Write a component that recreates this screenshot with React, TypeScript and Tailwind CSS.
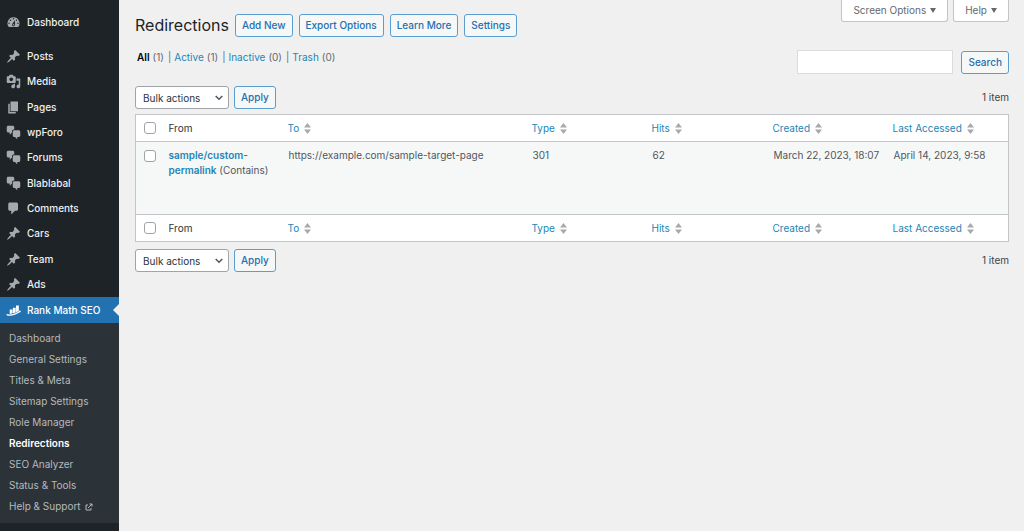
import { useState } from "react";

const icons = {
  dashboard:
    "M3.76 16h12.48A7.998 7.998 0 0 0 10 3a7.998 7.998 0 0 0-6.24 13zM10 4c.55 0 1 .45 1 1s-.45 1-1 1-1-.45-1-1 .45-1 1-1zM6 6c.55 0 1 .45 1 1s-.45 1-1 1-1-.45-1-1 .45-1 1-1zm8 0c.55 0 1 .45 1 1s-.45 1-1 1-1-.45-1-1 .45-1 1-1zm-5.37 5.55L12 7v6c0 1.1-.9 2-2 2s-2-.9-2-2c0-.57.24-1.08.63-1.45zM4 10c.55 0 1 .45 1 1s-.45 1-1 1-1-.45-1-1 .45-1 1-1zm12 0c.55 0 1 .45 1 1s-.45 1-1 1-1-.45-1-1 .45-1 1-1zm-5 3c0-.55-.45-1-1-1s-1 .45-1 1 .45 1 1 1 1-.45 1-1z",
  pin: "M10.44 3.02l1.82-1.82 6.36 6.35-1.83 1.82c-1.05-.68-2.48-.57-3.41.36l-.75.75c-.92.93-1.04 2.35-.35 3.41l-1.83 1.82-2.41-2.41-2.8 2.79c-.42.42-3.38 2.71-3.8 2.29s1.86-3.39 2.28-3.81l2.79-2.79L4.1 9.36l1.83-1.82c1.05.69 2.48.57 3.4-.36l.75-.75c.93-.92 1.05-2.35.36-3.41z",
  media:
    "M13 11V4c0-.55-.45-1-1-1h-1.67L9 1H5L3.67 3H2c-.55 0-1 .45-1 1v7c0 .55.45 1 1 1h10c.55 0 1-.45 1-1zM7 4.5c1.38 0 2.5 1.12 2.5 2.5S8.38 9.5 7 9.5 4.5 8.38 4.5 7 5.62 4.5 7 4.5zM14 6h5v10.5c0 1.38-1.12 2.5-2.5 2.5S14 17.88 14 16.5s1.12-2.5 2.5-2.5c.17 0 .34.02.5.05V9h-3V6zm-4 8.05V13h2v3.5c0 1.38-1.12 2.5-2.5 2.5S7 17.88 7 16.5 8.12 14 9.5 14c.17 0 .34.02.5.05z",
  pages: "M6 15V2h10v13H6zm-1 1h8v2H3V5h2v11z",
  chat: "M11 6h-.82C9.07 6 8 7.2 8 8.16V10l-3 3v-3H3c-1.1 0-2-.9-2-2V3c0-1.1.9-2 2-2h6c1.1 0 2 .9 2 2v3zm0 1h6c1.1 0 2 .9 2 2v5c0 1.1-.9 2-2 2h-2v3l-3-3h-1c-1.1 0-2-.9-2-2V9c0-1.1.9-2 2-2z",
  comment:
    "M5 2h9c1.1 0 2 .9 2 2v7c0 1.1-.9 2-2 2h-2l-5 5v-5H5c-1.1 0-2-.9-2-2V4c0-1.1.9-2 2-2z",
  rankMath:
    "M5 8.5h3.700v5.300L5 14.500zM9.200 6.200h3.700v6.300l-3.700 1.200zM13.400 3.200h3.700v7.300l-3.700 1.800zM0 14.800l5.500.500c5-.800 9-2.300 12-4.300l-.600-.900 3.100.2-1.300 2.800-.600-.900c-3.300 2.400-7.300 4.200-11.600 4.800H2z",
};

type IconName = keyof typeof icons;

const menuItems: { label: string; icon: IconName }[] = [
  { label: "Posts", icon: "pin" },
  { label: "Media", icon: "media" },
  { label: "Pages", icon: "pages" },
  { label: "wpForo", icon: "chat" },
  { label: "Forums", icon: "chat" },
  { label: "Blablabal", icon: "chat" },
  { label: "Comments", icon: "comment" },
  { label: "Cars", icon: "pin" },
  { label: "Team", icon: "pin" },
  { label: "Ads", icon: "pin" },
];

const subItems = [
  "Dashboard",
  "General Settings",
  "Titles & Meta",
  "Sitemap Settings",
  "Role Manager",
  "Redirections",
  "SEO Analyzer",
  "Status & Tools",
  "Help & Support",
];

const filters = [
  { label: "All", count: 1 },
  { label: "Active", count: 1 },
  { label: "Inactive", count: 0 },
  { label: "Trash", count: 0 },
];

const sortable = ["To", "Type", "Hits", "Created", "Last Accessed"];

function Icon({ name }: { name: IconName }) {
  return (
    <svg viewBox="0 0 20 20" className="size-[15px] shrink-0 fill-current" aria-hidden="true">
      <path d={icons[name]} />
    </svg>
  );
}

function MenuLink({ label, icon }: { label: string; icon: IconName }) {
  return (
    <a href="#" className="flex items-center gap-1.5 pl-1.5 text-[#a7aaad]">
      <Icon name={icon} />
      <span className="text-[#f0f0f1]">{label}</span>
    </a>
  );
}

function Button({ children }: { children: string }) {
  return (
    <button
      type="button"
      className="h-[23px] rounded-[3px] border border-[#5b9dd0] bg-[#f6f7f7] px-1.5 font-medium text-[#2271b1]"
    >
      {children}
    </button>
  );
}

function SortArrows() {
  return (
    <svg viewBox="0 0 7 11" className="h-[11px] w-[7px] fill-[#a7aaad]" aria-hidden="true">
      <path d="M3.500 0L7 4.500H0zM3.500 11L0 6.500h7z" />
    </svg>
  );
}

function Checkbox({ label }: { label: string }) {
  return (
    <input
      type="checkbox"
      aria-label={label}
      className="block size-3 appearance-none rounded-[3px] border border-[#a0a3a7] bg-white checked:bg-[#2271b1]"
    />
  );
}

function HeadingRow() {
  return (
    <tr className="h-[27px] bg-white">
      <th className="pl-2">
        <Checkbox label="Select all" />
      </th>
      <th className="px-[7px] font-normal text-[#2c3338]">From</th>
      {sortable.map((name) => (
        <th key={name} className="px-[7px] font-normal">
          <a href="#" className="flex items-center gap-[5px] text-[#2585b5]">
            {name}
            <SortArrows />
          </a>
        </th>
      ))}
    </tr>
  );
}

function BulkActions({ id }: { id: string }) {
  return (
    <div className="flex items-center justify-between">
      <div className="flex gap-[5px]">
        <div className="relative">
          <select
            id={id}
            aria-label="Select bulk action"
            className="h-[23px] w-[94px] appearance-none rounded-[3px] border border-[#a0a3a7] bg-white pr-4 pl-[7px] leading-5 text-[#2c3338]"
          >
            <option>Bulk actions</option>
            <option>Activate</option>
            <option>Deactivate</option>
            <option>Move to Trash</option>
          </select>
          <svg
            viewBox="0 0 8 6"
            className="pointer-events-none absolute top-[9px] right-1.5 h-1.5 w-2 fill-none stroke-[#50575e] stroke-[1.5]"
            aria-hidden="true"
          >
            <path d="M.7 1L4 4.300 7.300 1" />
          </svg>
        </div>
        <Button>Apply</Button>
      </div>
      <span>1 item</span>
    </div>
  );
}

export default function App() {
  const [query, setQuery] = useState("");

  return (
    <div className="flex min-h-screen bg-[#f0f0f1] font-['Inter',sans-serif] text-[10px] leading-[15px] text-[#3c434a]">
      <nav className="w-[119px] shrink-0 bg-[#1d2327]">
        <div className="font-medium">
          <div className="grid h-11 items-center">
            <MenuLink label="Dashboard" icon="dashboard" />
          </div>
          <div className="grid h-[253px] auto-rows-fr">
            {menuItems.map((item) => (
              <MenuLink key={item.label} {...item} />
            ))}
          </div>
          <a
            href="#"
            className="relative flex h-[26px] items-center gap-1.5 bg-[#2271b1] pl-1.5 text-white"
          >
            <Icon name="rankMath" />
            Rank Math SEO
            <span className="absolute right-0 border-y-[6px] border-r-[6px] border-y-transparent border-r-[#f0f0f1]" />
          </a>
        </div>
        <ul className="bg-[#2c3338] pt-[5px] pb-1.5 text-[#b5b9bd]">
          {subItems.map((name) => (
            <li key={name} className="flex h-[21px] items-center pl-[9px]">
              <a
                href="#"
                className={
                  name === "Redirections"
                    ? "font-semibold text-white"
                    : "flex items-center gap-1"
                }
              >
                {name}
                {name === "Help & Support" && (
                  <svg
                    viewBox="0 0 8 8"
                    className="size-2 fill-none stroke-current"
                    aria-hidden="true"
                  >
                    <path d="M3 2H1v5h5V5M3 5l4-4M4.500 1H7v2.500" />
                  </svg>
                )}
              </a>
            </li>
          ))}
        </ul>
      </nav>

      <main className="min-w-0 flex-1 pr-[15px] pl-4">
        <div className="flex items-start justify-between">
          <div className="flex items-center gap-1.5 pt-3.5">
            <h1 className="text-base leading-[23px] text-[#1d2327]">Redirections</h1>
            <Button>Add New</Button>
            <Button>Export Options</Button>
            <Button>Learn More</Button>
            <Button>Settings</Button>
          </div>
          <div className="flex gap-[5px] text-[#646970]">
            {["Screen Options", "Help"].map((name) => (
              <button
                key={name}
                type="button"
                className="flex h-[22px] items-center gap-1 rounded-b-[3px] border border-t-0 border-[#c3c4c7] bg-white px-[11px]"
              >
                {name}
                <svg viewBox="0 0 6 5" className="h-[5px] w-1.5 fill-current" aria-hidden="true">
                  <path d="M0 0h6L3 5z" />
                </svg>
              </button>
            ))}
          </div>
        </div>

        <div className="flex items-start justify-between pt-[13px]">
          <ul className="flex gap-1 pl-0.5 text-[#646970]">
            {filters.map(({ label, count }, i) => (
              <li key={label} className="flex gap-[3px]">
                {i > 0 && <span>|</span>}
                <a
                  href="#"
                  className={label === "All" ? "font-semibold text-black" : "text-[#2585b5]"}
                >
                  {label}
                </a>
                <span>({count})</span>
              </li>
            ))}
          </ul>
          <form className="flex items-center gap-2" onSubmit={(e) => e.preventDefault()}>
            <input
              type="search"
              aria-label="Search redirections"
              value={query}
              onChange={(e) => setQuery(e.target.value)}
              className="h-6 w-[156px] border border-[#dcdcde] bg-white px-1.5"
            />
            <Button>Search</Button>
          </form>
        </div>

        <div className="pt-3">
          <BulkActions id="bulk-top" />
        </div>

        <table className="mt-[5px] mb-[7px] w-full table-fixed border-collapse border border-[#c3c4c7] text-left">
          <colgroup>
            <col className="w-[26px]" />
            <col className="w-[119px]" />
            <col />
            <col className="w-[120px]" />
            <col className="w-[121px]" />
            <col className="w-[120px]" />
            <col className="w-[123px]" />
          </colgroup>
          <thead className="border-b border-[#c3c4c7]">
            <HeadingRow />
          </thead>
          <tbody className="bg-[#f6f7f7] text-[#50575e]">
            <tr className="h-[73px] align-top">
              <td className="pt-2 pl-2">
                <Checkbox label="Select sample/custom-permalink" />
              </td>
              <td className="px-[7px] pt-1.5">
                <a href="#" className="font-semibold text-[#2585b5]">
                  sample/custom-permalink
                </a>{" "}
                (Contains)
              </td>
              <td className="px-2 pt-1.5">https://example.com/sample-target-page</td>
              <td className="px-2 pt-1.5">301</td>
              <td className="px-2 pt-1.5">62</td>
              <td className="px-2 pt-1.5 whitespace-nowrap">March 22, 2023, 18:07</td>
              <td className="px-2 pt-1.5 whitespace-nowrap">April 14, 2023, 9:58</td>
            </tr>
          </tbody>
          <tfoot className="border-t border-[#c3c4c7]">
            <HeadingRow />
          </tfoot>
        </table>

        <BulkActions id="bulk-bottom" />
      </main>
    </div>
  );
}
